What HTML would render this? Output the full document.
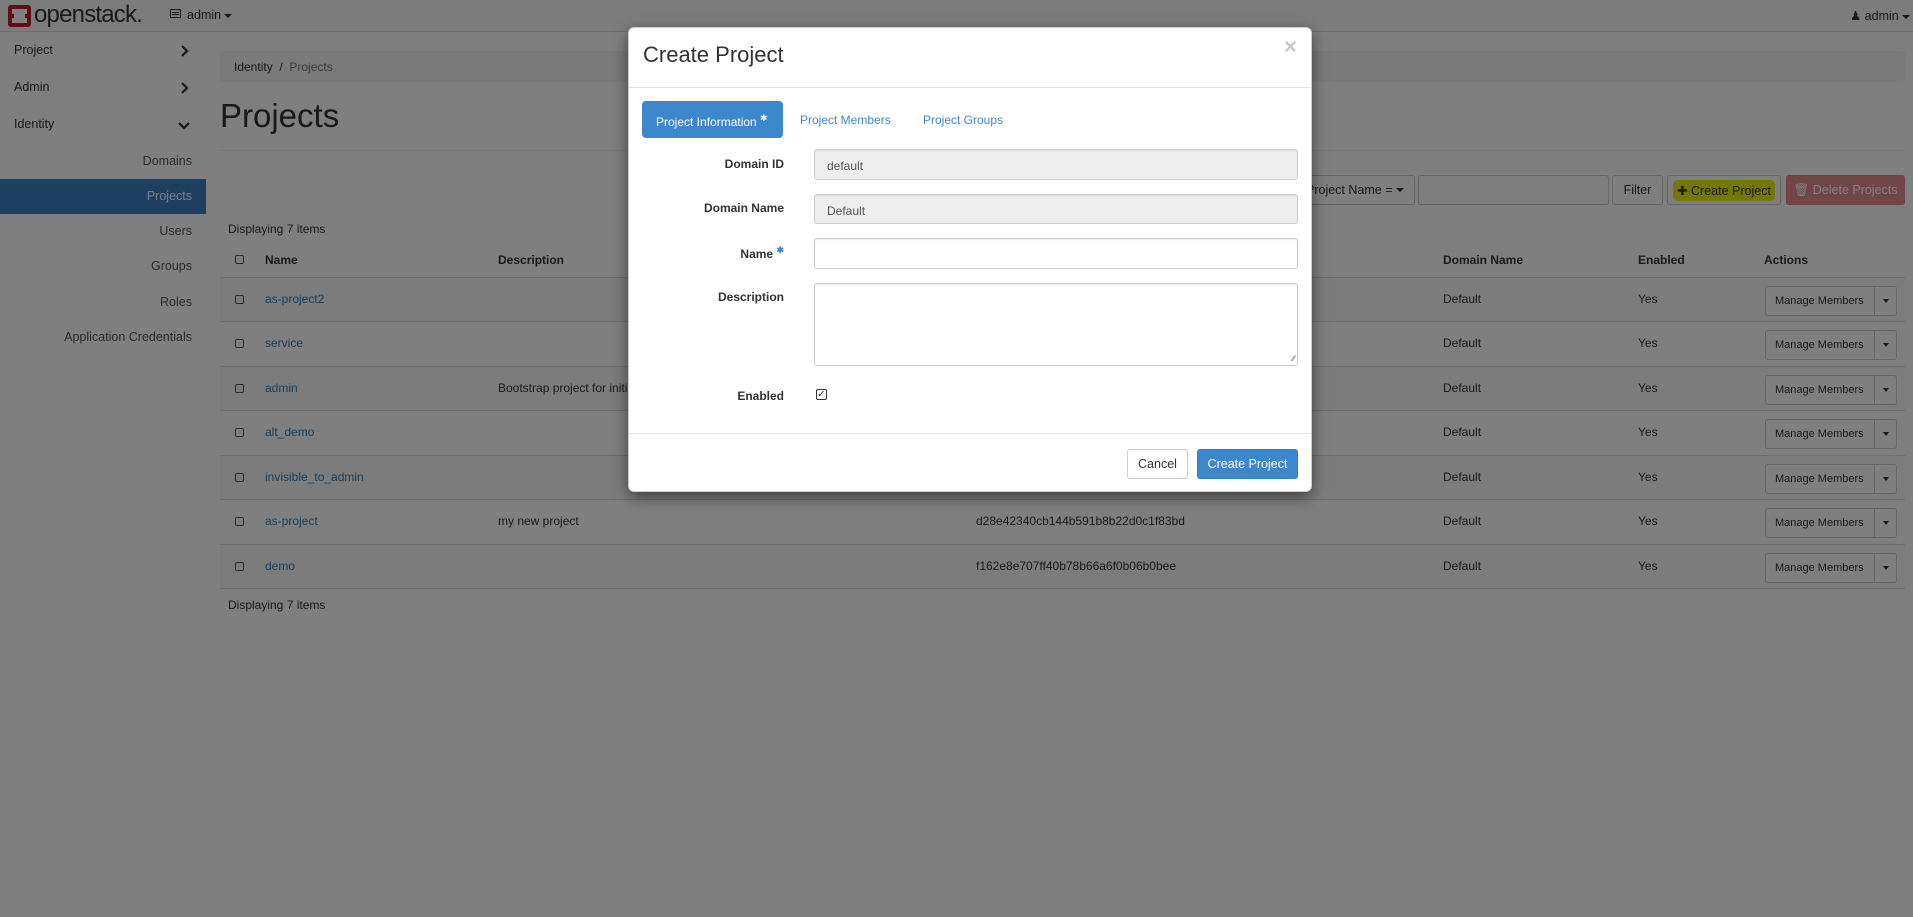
<!DOCTYPE html>
<html><head><meta charset="utf-8">
<style>
*{box-sizing:border-box;margin:0;padding:0}
body{width:1913px;height:917px;overflow:hidden;position:relative;background:#fff;font-family:"Liberation Sans",Arial,sans-serif;font-size:12px;color:#333}
.a{position:absolute}
a{color:#337ab7;text-decoration:none}
.nav{left:0;top:0;width:1913px;height:32px;background:#f8f8f8;border-bottom:1px solid #ddd}
.side{left:0;top:33px;width:206px}
.si{position:absolute;left:14px;font-size:12.5px;color:#333}
.sr{position:absolute;right:14px;font-size:12.5px;color:#555;text-align:right;width:200px}
.bc{left:220px;top:51px;width:1685px;height:31px;background:#f5f5f5;border-radius:4px}
.btn{position:absolute;border:1px solid #ccc;border-radius:3px;background:#fff;font-size:12.5px;color:#333;display:flex;align-items:center;justify-content:center}
.row{position:absolute;left:220px;width:1685px;height:44px;border-top:1px solid #ddd}
.row.s{background:#f9f9f9}
.row span{position:absolute;top:14px}
.cb{position:absolute;width:9px;height:9px;border:1px solid #555;border-radius:2px;left:15px;top:17px}
.mm{position:absolute;left:1545px;top:8px;width:132px;height:30px;border:1px solid #ccc;border-radius:3px;background:#fff;font-size:11px}
.mm b{position:absolute;left:9px;top:8px;font-weight:normal}
.mm i{position:absolute;left:108px;top:0;width:23px;height:28px;border-left:1px solid #ccc}
.mm i:after{content:"";position:absolute;left:8px;top:12px;border-left:3px solid transparent;border-right:3px solid transparent;border-top:4px solid #333}
.ov{left:0;top:0;width:1913px;height:917px;background:rgba(0,0,0,.5)}
.modal{left:628px;top:27px;width:684px;height:465px;background:#fff;border-radius:6px;box-shadow:0 5px 15px rgba(0,0,0,.5);border:1px solid rgba(0,0,0,.2)}
.lbl{position:absolute;right:527px;font-weight:bold;font-size:12px;color:#333;text-align:right}
.inp{position:absolute;left:185px;width:484px;border:1px solid #ccc;border-radius:3px;background:#fff;box-shadow:inset 0 1px 1px rgba(0,0,0,.075)}
.inp.d{background:#eee;color:#555;padding:9px 12px;font-size:12px}
.caret{display:inline-block;border-left:4px solid transparent;border-right:4px solid transparent;border-top:4px solid #333;vertical-align:middle;margin-left:3px}
</style></head><body>
<div class="a nav">
  <div class="a" style="left:8px;top:5px;width:23px;height:22px;background:#c4182c;border-radius:3px"></div>
  <div class="a" style="left:12px;top:9px;width:15px;height:14px;background:#fff"></div>
  <div class="a" style="left:8px;top:14px;width:6px;height:4px;background:#c4182c"></div>
  <div class="a" style="left:25px;top:14px;width:6px;height:4px;background:#c4182c"></div>
  <div class="a" style="left:34px;top:1px;font-size:24px;color:#333;letter-spacing:-0.8px">openstack.</div>
  <div class="a" style="left:170px;top:9px;width:11px;height:9px;border:1px solid #333"></div>
  <div class="a" style="left:172px;top:12px;width:7px;height:1px;background:#333;box-shadow:0 2px 0 #333"></div>
  <div class="a" style="left:187px;top:8px;font-size:12.5px">admin<span class="caret"></span></div>
  <div class="a" style="left:1850px;top:8px;font-size:12.5px">&#9823; admin<span class="caret"></span></div>
</div>
<div class="a side" style="height:884px">
  <div class="si" style="top:10px">Project</div>
  <svg class="a" style="left:180px;top:12px" width="9" height="12"><path d="M2 1l5 5-5 5" stroke="#333" stroke-width="2.2" fill="none"/></svg>
  <div class="si" style="top:47px">Admin</div>
  <svg class="a" style="left:180px;top:49px" width="9" height="12"><path d="M2 1l5 5-5 5" stroke="#333" stroke-width="2.2" fill="none"/></svg>
  <div class="si" style="top:84px">Identity</div>
  <svg class="a" style="left:178px;top:88px" width="12" height="9"><path d="M1 2l5 5 5-5" stroke="#333" stroke-width="2.2" fill="none"/></svg>
  <div class="sr" style="top:121px">Domains</div>
  <div class="a" style="left:0;top:146px;width:206px;height:35px;background:#3d7fbf"></div>
  <div class="sr" style="top:156px;color:#fff">Projects</div>
  <div class="sr" style="top:191px">Users</div>
  <div class="sr" style="top:226px">Groups</div>
  <div class="sr" style="top:262px">Roles</div>
  <div class="sr" style="top:297px">Application Credentials</div>
</div>
<div class="a bc"><span class="a" style="left:14px;top:9px">Identity&nbsp; /&nbsp; <span style="color:#777">Projects</span></span></div>
<div class="a" style="left:220px;top:97px;font-size:33px;color:#333">Projects</div>
<div class="a" style="left:220px;top:150px;width:1685px;height:1px;background:#eee"></div>
<div class="btn" style="left:1295px;top:175px;width:120px;height:30px;justify-content:flex-start;padding-left:10px">Project Name = <span class="caret"></span></div>
<div class="btn" style="left:1418px;top:175px;width:191px;height:30px"></div>
<div class="btn" style="left:1612px;top:175px;width:51px;height:30px">Filter</div>
<div class="btn" style="left:1667px;top:175px;width:114px;height:30px"><span style="background:#e6f000;padding:3px 4px;border-radius:5px">&#10010; Create Project</span></div>
<div class="btn" style="left:1786px;top:175px;width:119px;height:30px;background:#e38d8b;border-color:#dd8080;color:#fff">&#128465; Delete Projects</div>
<div class="a" style="left:228px;top:222px">Displaying 7 items</div>
<div class="a" style="left:220px;top:248px;width:1685px;height:29px;font-weight:bold">
  <div class="cb" style="top:7px"></div>
  <span class="a" style="left:45px;top:5px">Name</span>
  <span class="a" style="left:278px;top:5px">Description</span>
  <span class="a" style="left:1223px;top:5px">Domain Name</span>
  <span class="a" style="left:1418px;top:5px">Enabled</span>
  <span class="a" style="left:1544px;top:5px">Actions</span>
</div>
<div class="row s" style="top:277px"><div class="cb"></div><span style="left:45px"><a>as-project2</a></span><span style="left:1223px">Default</span><span style="left:1418px">Yes</span><div class="mm"><b>Manage Members</b><i></i></div></div>
<div class="row" style="top:321px"><div class="cb"></div><span style="left:45px"><a>service</a></span><span style="left:1223px">Default</span><span style="left:1418px">Yes</span><div class="mm"><b>Manage Members</b><i></i></div></div>
<div class="row s" style="top:366px"><div class="cb"></div><span style="left:45px"><a>admin</a></span><span style="left:278px">Bootstrap project for initializing the cloud.</span><span style="left:1223px">Default</span><span style="left:1418px">Yes</span><div class="mm"><b>Manage Members</b><i></i></div></div>
<div class="row" style="top:410px"><div class="cb"></div><span style="left:45px"><a>alt_demo</a></span><span style="left:1223px">Default</span><span style="left:1418px">Yes</span><div class="mm"><b>Manage Members</b><i></i></div></div>
<div class="row s" style="top:455px"><div class="cb"></div><span style="left:45px"><a>invisible_to_admin</a></span><span style="left:1223px">Default</span><span style="left:1418px">Yes</span><div class="mm"><b>Manage Members</b><i></i></div></div>
<div class="row" style="top:499px"><div class="cb"></div><span style="left:45px"><a>as-project</a></span><span style="left:278px">my new project</span><span style="left:756px">d28e42340cb144b591b8b22d0c1f83bd</span><span style="left:1223px">Default</span><span style="left:1418px">Yes</span><div class="mm"><b>Manage Members</b><i></i></div></div>
<div class="row s" style="top:544px"><div class="cb"></div><span style="left:45px"><a>demo</a></span><span style="left:756px">f162e8e707ff40b78b66a6f0b06b0bee</span><span style="left:1223px">Default</span><span style="left:1418px">Yes</span><div class="mm"><b>Manage Members</b><i></i></div></div>
<div class="a" style="left:220px;top:588px;width:1685px;height:1px;background:#ddd"></div>
<div class="a" style="left:228px;top:598px">Displaying 7 items</div>

<div class="a ov"></div>

<div class="a modal">
  <div class="a" style="left:14px;top:14px;font-size:22px;color:#333">Create Project</div>
  <div class="a" style="left:655px;top:6px;font-size:22px;font-weight:bold;color:#c8c8c8">&times;</div>
  <div class="a" style="left:0;top:59px;width:682px;height:1px;background:#e5e5e5"></div>
  <div class="a" style="left:13px;top:73px;width:141px;height:37px;background:#3d88cc;border-radius:4px;color:#fff;padding:12px 0 0 14px;font-size:12px">Project Information <sup style="font-size:9px">&#10033;</sup></div>
  <div class="a" style="left:171px;top:85px;color:#3d88cc">Project Members</div>
  <div class="a" style="left:294px;top:85px;color:#3d88cc">Project Groups</div>
  <div class="lbl" style="top:129px">Domain ID</div>
  <div class="inp d" style="top:121px;height:31px">default</div>
  <div class="lbl" style="top:173px">Domain Name</div>
  <div class="inp d" style="top:166px;height:30px">Default</div>
  <div class="lbl" style="top:217px">Name <sup style="color:#3d88cc;font-size:9px">&#10033;</sup></div>
  <div class="inp" style="top:210px;height:31px"></div>
  <div class="lbl" style="top:262px">Description</div>
  <div class="inp" style="top:255px;height:83px"><div class="a" style="right:2px;bottom:2px;font-size:8px;color:#555">&#8725;&#8725;</div></div>
  <div class="lbl" style="top:361px">Enabled</div>
  <div class="a" style="left:187px;top:361px;width:11px;height:11px;border:1px solid #333;border-radius:2px;font-size:10px;line-height:9px;text-align:center">&#10003;</div>
  <div class="a" style="left:0;top:405px;width:682px;height:1px;background:#e5e5e5"></div>
  <div class="btn" style="left:498px;top:421px;width:61px;height:30px">Cancel</div>
  <div class="btn" style="left:568px;top:421px;width:101px;height:30px;background:#3d88cc;border-color:#3580c2;color:#fff">Create Project</div>
</div>
</body></html>
